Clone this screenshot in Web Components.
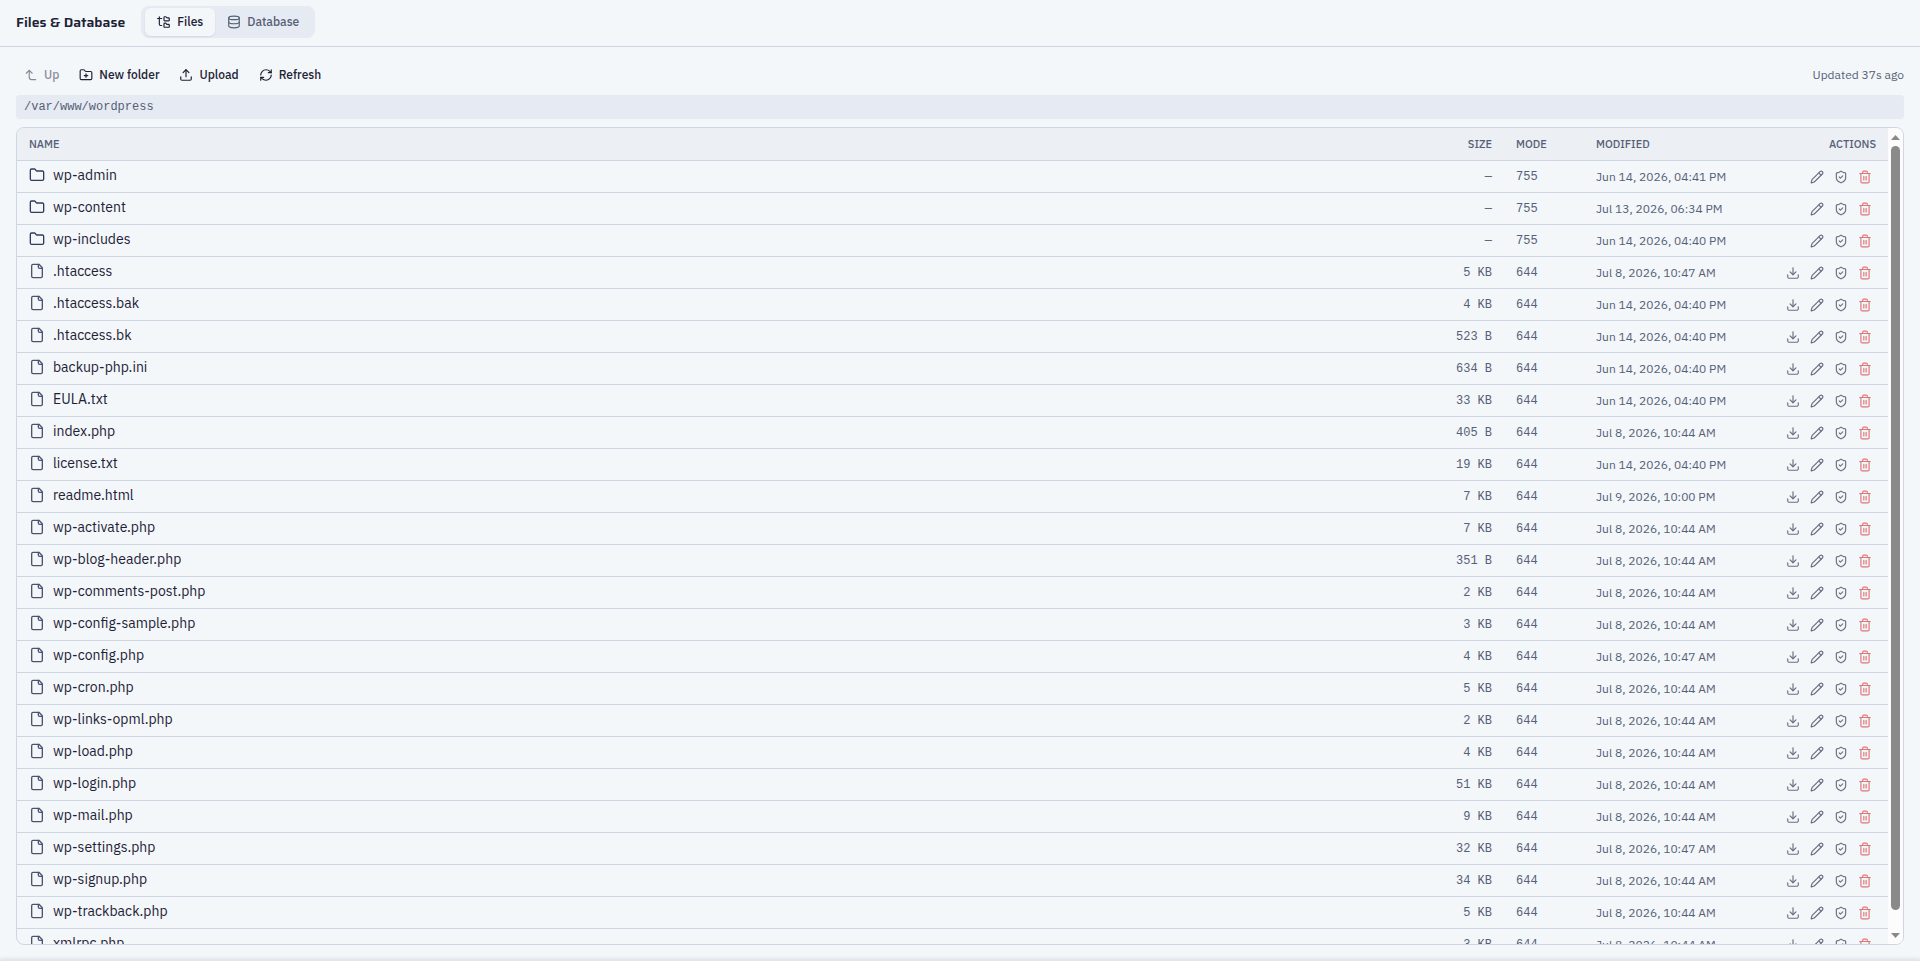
<!DOCTYPE html>
<html lang="en">
<head>
<meta charset="utf-8">
<meta name="viewport" content="width=device-width, initial-scale=1">
<title>Files &amp; Database</title>
<style>
    :root {
        --bg: #f3f7fa;
        --surface: #e6eaf2;
        --head: #eceff4;
        --line: #cfd6e3;
        --text: #1d2235;
        --muted: #556076;
        --danger: #df7676;
        --mono: "Liberation Mono", monospace;
        --sans: "IBM Plex Sans", "Noto Sans", sans-serif;
        --display: "Saira", "IBM Plex Sans", "Noto Sans", sans-serif;
    }
    html, body { height: 100%; }
    body { margin: 0; background: var(--bg); color: var(--text); font: 12px/16px var(--sans); }
</style>
</head>
<body>
<files-page></files-page>

<script>
const ICONS = {
    tree: '<path d="M20 10a1 1 0 0 0 1-1V6a1 1 0 0 0-1-1h-2.5a1 1 0 0 1-.8-.4l-.9-1.2A1 1 0 0 0 15 3h-2a1 1 0 0 0-1 1v5a1 1 0 0 0 1 1Z"/><path d="M20 21a1 1 0 0 0 1-1v-3a1 1 0 0 0-1-1h-2.9a1 1 0 0 1-.88-.55l-.42-.85a1 1 0 0 0-.92-.6H13a1 1 0 0 0-1 1v5a1 1 0 0 0 1 1Z"/><path d="M1 6h7"/><path d="M4 3v13a2 2 0 0 0 2 2h2"/>',
    database: '<ellipse cx="12" cy="5" rx="9" ry="3"/><path d="M3 5v14a9 3 0 0 0 18 0V5"/><path d="M3 12a9 3 0 0 0 18 0"/>',
    up: '<path d="M14 9 9 4 4 9"/><path d="M20 20h-7a4 4 0 0 1-4-4V4"/>',
    folderPlus: '<path d="M12 10v6M9 13h6"/><path d="M20 20a2 2 0 0 0 2-2V8a2 2 0 0 0-2-2h-7.900a2 2 0 0 1-1.690-.9L9.600 3.900A2 2 0 0 0 7.930 3H4a2 2 0 0 0-2 2v13a2 2 0 0 0 2 2Z"/>',
    upload: '<path d="M21 15v4a2 2 0 0 1-2 2H5a2 2 0 0 1-2-2v-4"/><path d="m17 8-5-5-5 5"/><path d="M12 3v12"/>',
    refresh: '<path d="M3 12a9 9 0 0 1 9-9 9.750 9.750 0 0 1 6.740 2.740L21 8"/><path d="M21 3v5h-5"/><path d="M21 12a9 9 0 0 1-9 9 9.750 9.750 0 0 1-6.740-2.740L3 16"/><path d="M8 16H3v5"/>',
    folder: '<path d="M20 20a2 2 0 0 0 2-2V8a2 2 0 0 0-2-2h-7.900a2 2 0 0 1-1.690-.9L9.600 3.900A2 2 0 0 0 7.930 3H4a2 2 0 0 0-2 2v13a2 2 0 0 0 2 2Z"/>',
    file: '<path d="M15 2H6a2 2 0 0 0-2 2v16a2 2 0 0 0 2 2h12a2 2 0 0 0 2-2V7Z"/><path d="M14 2v4a2 2 0 0 0 2 2h4"/>',
    download: '<path d="M21 15v4a2 2 0 0 1-2 2H5a2 2 0 0 1-2-2v-4"/><path d="m7 10 5 5 5-5"/><path d="M12 15V3"/>',
    pencil: '<path d="M21.170 6.810a1 1 0 0 0-3.990-3.990L3.840 16.170a2 2 0 0 0-.5.830l-1.320 4.350a.5.5 0 0 0 .62.620l4.350-1.320a2 2 0 0 0 .83-.5Z"/><path d="m15 5 4 4"/>',
    shield: '<path d="M20 13c0 5-3.500 7.500-7.660 8.950a1 1 0 0 1-.67-.01C7.500 20.500 4 18 4 13V6a1 1 0 0 1 1-1c2 0 4.500-1.200 6.240-2.720a1.170 1.170 0 0 1 1.520 0C14.510 3.810 17 5 19 5a1 1 0 0 1 1 1Z"/><path d="m9 12 2 2 4-4"/>',
    trash: '<path d="M3 6h18"/><path d="M19 6v14a2 2 0 0 1-2 2H7a2 2 0 0 1-2-2V6"/><path d="M8 6V4a2 2 0 0 1 2-2h4a2 2 0 0 1 2 2v2"/><path d="M10 11v6M14 11v6"/>'
};

const FILES = [
    ['wp-admin', '—', '755', 'Jun 14, 2026, 04:41 PM', true],
    ['wp-content', '—', '755', 'Jul 13, 2026, 06:34 PM', true],
    ['wp-includes', '—', '755', 'Jun 14, 2026, 04:40 PM', true],
    ['.htaccess', '5 KB', '644', 'Jul 8, 2026, 10:47 AM'],
    ['.htaccess.bak', '4 KB', '644', 'Jun 14, 2026, 04:40 PM'],
    ['.htaccess.bk', '523 B', '644', 'Jun 14, 2026, 04:40 PM'],
    ['backup-php.ini', '634 B', '644', 'Jun 14, 2026, 04:40 PM'],
    ['EULA.txt', '33 KB', '644', 'Jun 14, 2026, 04:40 PM'],
    ['index.php', '405 B', '644', 'Jul 8, 2026, 10:44 AM'],
    ['license.txt', '19 KB', '644', 'Jun 14, 2026, 04:40 PM'],
    ['readme.html', '7 KB', '644', 'Jul 9, 2026, 10:00 PM'],
    ['wp-activate.php', '7 KB', '644', 'Jul 8, 2026, 10:44 AM'],
    ['wp-blog-header.php', '351 B', '644', 'Jul 8, 2026, 10:44 AM'],
    ['wp-comments-post.php', '2 KB', '644', 'Jul 8, 2026, 10:44 AM'],
    ['wp-config-sample.php', '3 KB', '644', 'Jul 8, 2026, 10:44 AM'],
    ['wp-config.php', '4 KB', '644', 'Jul 8, 2026, 10:47 AM'],
    ['wp-cron.php', '5 KB', '644', 'Jul 8, 2026, 10:44 AM'],
    ['wp-links-opml.php', '2 KB', '644', 'Jul 8, 2026, 10:44 AM'],
    ['wp-load.php', '4 KB', '644', 'Jul 8, 2026, 10:44 AM'],
    ['wp-login.php', '51 KB', '644', 'Jul 8, 2026, 10:44 AM'],
    ['wp-mail.php', '9 KB', '644', 'Jul 8, 2026, 10:44 AM'],
    ['wp-settings.php', '32 KB', '644', 'Jul 8, 2026, 10:47 AM'],
    ['wp-signup.php', '34 KB', '644', 'Jul 8, 2026, 10:44 AM'],
    ['wp-trackback.php', '5 KB', '644', 'Jul 8, 2026, 10:44 AM'],
    ['xmlrpc.php', '3 KB', '644', 'Jul 8, 2026, 10:44 AM']
];

// ── <ui-icon name="…"> ────────────────────────────────────────────────────

class UiIcon extends HTMLElement {
    connectedCallback() {
        if (this.shadowRoot) return;
        this.attachShadow({ mode: 'open' }).innerHTML = `
            <style>
                :host { display: block; flex: none; width: 14px; height: 14px; }
                svg { display: block; width: 100%; height: 100%; }
            </style>
            <svg viewBox="0 0 24 24" fill="none" stroke="currentColor" stroke-width="2"
                 stroke-linecap="round" stroke-linejoin="round" aria-hidden="true">${ICONS[this.getAttribute('name')]}</svg>`;
    }
}
customElements.define('ui-icon', UiIcon);

// ── Toolbar button ────────────────────────────────────────────────────────

class ToolButton extends HTMLElement {
    connectedCallback() {
        if (this.shadowRoot) return;
        this.attachShadow({ mode: 'open' }).innerHTML = `
            <style>
                :host { display: block; }
                button { display: flex; align-items: center; gap: 6px; height: 24px; padding: 0 8px;
                         border: 0; border-radius: 4px; background: none; color: var(--text);
                         font: 500 12px/16px var(--sans); cursor: pointer; }
                button:hover:enabled { background: var(--surface); }
                button:disabled { opacity: 0.5; cursor: default; }
            </style>
            <button type="button" ${this.hasAttribute('disabled') ? 'disabled' : ''}>
                <ui-icon name="${this.getAttribute('icon')}"></ui-icon><slot></slot>
            </button>`;
    }
}
customElements.define('tool-button', ToolButton);

// ── Files / Database switch ───────────────────────────────────────────────

class ViewTabs extends HTMLElement {
    connectedCallback() {
        if (this.shadowRoot) return;
        this.attachShadow({ mode: 'open' }).innerHTML = `
            <style>
                :host { display: flex; padding: 2px 4px; border-radius: 8px; background: var(--surface); }
                button { display: flex; align-items: center; gap: 6px; height: 28px; padding: 0 12px;
                         border: 0; border-radius: 6px; background: none; color: var(--muted);
                         font: 500 12px/16px var(--sans); cursor: pointer; }
                button[aria-selected=true] { background: var(--bg); color: var(--text);
                         box-shadow: 0 1px 2px rgba(30, 40, 70, 0.08); }
            </style>
            <button type="button" role="tab" aria-selected="true"><ui-icon name="tree"></ui-icon>Files</button>
            <button type="button" role="tab" aria-selected="false"><ui-icon name="database"></ui-icon>Database</button>`;
        this.setAttribute('role', 'tablist');
        const tabs = this.shadowRoot.querySelectorAll('button');
        tabs.forEach(tab => tab.addEventListener('click', () => {
            tabs.forEach(t => t.setAttribute('aria-selected', String(t === tab)));
        }));
    }
}
customElements.define('view-tabs', ViewTabs);

// ── Scroll area with an always visible rail ───────────────────────────────

class ScrollArea extends HTMLElement {
    connectedCallback() {
        if (this.shadowRoot) return;
        this.attachShadow({ mode: 'open' }).innerHTML = `
            <style>
                :host { display: flex; min-height: 0; overflow: hidden; box-sizing: border-box;
                        border: 1px solid var(--line); border-radius: 8px; }
                .view { flex: 1; min-width: 0; overflow-y: auto; scrollbar-width: none; }
                .rail { display: flex; flex-direction: column; align-items: center; flex: none;
                        width: 15px; background: #fcfcfc; }
                .arrow { display: grid; place-items: center; width: 15px; height: 18px; padding: 0;
                         border: 0; background: none; }
                .arrow svg { display: block; width: 9px; height: 5px; fill: #888; }
                .track { flex: 1; width: 9px; min-height: 0; }
                .thumb { width: 9px; border-radius: 5px; background: #8a8a8a; }
            </style>
            <div class="view"><slot></slot></div>
            <div class="rail">
                <button class="arrow" type="button" aria-label="Scroll up"><svg viewBox="0 0 9 5"><path d="M4.500 0 9 5H0Z"/></svg></button>
                <div class="track"><div class="thumb"></div></div>
                <button class="arrow" type="button" aria-label="Scroll down"><svg viewBox="0 0 9 5"><path d="M0 0h9L4.500 5Z"/></svg></button>
            </div>`;
        this._view = this.shadowRoot.querySelector('.view');
        this._track = this.shadowRoot.querySelector('.track');
        this._thumb = this.shadowRoot.querySelector('.thumb');
        const [up, down] = this.shadowRoot.querySelectorAll('.arrow');
        up.addEventListener('click', () => this._view.scrollBy(0, -32));
        down.addEventListener('click', () => this._view.scrollBy(0, 32));
        this._view.addEventListener('scroll', () => this._sync());
        new ResizeObserver(() => this._sync()).observe(this._view);
    }

    _sync() {
        const ratio = this._track.clientHeight / this._view.scrollHeight;
        this._thumb.style.height = Math.round(this._view.clientHeight * ratio) + 'px';
        this._thumb.style.marginTop = Math.round(this._view.scrollTop * ratio) + 'px';
    }
}
customElements.define('scroll-area', ScrollArea);

// ── File listing ──────────────────────────────────────────────────────────

class FileTable extends HTMLElement {
    connectedCallback() {
        if (this.shadowRoot) return;
        this.attachShadow({ mode: 'open' }).innerHTML = `
            <style>
                :host { display: block; }
                table { width: 100%; table-layout: fixed; border-collapse: separate; border-spacing: 0; }
                th, td { box-sizing: border-box; padding: 0 12px; text-align: left; white-space: nowrap;
                         border-bottom: 1px solid var(--line); color: var(--muted); }
                th { position: sticky; top: 0; height: 33px; background: var(--head);
                     font: 500 11px/16px var(--sans); text-transform: uppercase; }
                td { height: 32px; }
                .size { width: 110px; text-align: right; }
                .mode { width: 80px; }
                .modified { width: 164px; }
                .actions { width: 140px; text-align: right; }
                td.size, td.mode { font: 12px/16px var(--mono); }
                td.name { padding-bottom: 4px; }
                td.tools { padding-right: 11px; }
                .open { display: flex; align-items: center; gap: 8px; padding: 0; border: 0; background: none;
                        color: var(--text); font: 14px/20px var(--sans); cursor: pointer; }
                .open ui-icon { width: 16px; height: 16px; color: #4b556b; }
                .dir ui-icon { color: #2f3c5c; }
                .tools div { display: flex; justify-content: flex-end; }
                .tools button { display: grid; place-items: center; width: 24px; height: 24px; padding: 0;
                                border: 0; border-radius: 4px; background: none; color: #6a7080; cursor: pointer; }
                .tools button:hover { background: var(--surface); }
                .tools .delete { color: var(--danger); }
            </style>
            <table>
                <thead>
                    <tr>
                        <th class="name">Name</th><th class="size">Size</th><th class="mode">Mode</th>
                        <th class="modified">Modified</th><th class="actions">Actions</th>
                    </tr>
                </thead>
                <tbody>${FILES.map(f => this._row(f)).join('')}</tbody>
            </table>`;
    }

    _row([name, size, mode, modified, isDir]) {
        const tool = (icon, label, cls = '') =>
            `<button type="button" class="${cls}" aria-label="${label} ${name}"><ui-icon name="${icon}"></ui-icon></button>`;
        return `<tr>
            <td class="name"><button type="button" class="open ${isDir ? 'dir' : ''}"><ui-icon name="${isDir ? 'folder' : 'file'}"></ui-icon>${name}</button></td>
            <td class="size">${size}</td>
            <td class="mode">${mode}</td>
            <td class="modified">${modified}</td>
            <td class="tools"><div>
                ${isDir ? '' : tool('download', 'Download')}
                ${tool('pencil', 'Rename')}
                ${tool('shield', 'Permissions of')}
                ${tool('trash', 'Delete', 'delete')}
            </div></td>
        </tr>`;
    }
}
customElements.define('file-table', FileTable);

// ── Page ──────────────────────────────────────────────────────────────────

class FilesPage extends HTMLElement {
    connectedCallback() {
        if (this.shadowRoot) return;
        this.attachShadow({ mode: 'open' }).innerHTML = `
            <style>
                :host { display: flex; flex-direction: column; height: 100vh; overflow: hidden; }
                header { display: flex; align-items: center; gap: 16px; padding: 6px 16px 8px;
                         border-bottom: 1px solid var(--line); }
                h1 { margin: 0; font: 600 14px/20px var(--display); }
                main { display: flex; flex-direction: column; gap: 8px; flex: 1; min-height: 0; padding: 16px; }
                .toolbar { display: flex; align-items: center; gap: 4px; }
                .updated { margin-left: auto; color: var(--muted); }
                .path { padding: 4px 8px; border-radius: 4px; background: var(--surface);
                        color: var(--muted); font: 12px/16px var(--mono); }
                scroll-area { flex: 1; }
                footer { box-shadow: 0 0 4px 1px rgba(30, 40, 60, 0.25); }
            </style>
            <header>
                <h1>Files &amp; Database</h1>
                <view-tabs></view-tabs>
            </header>
            <main>
                <div class="toolbar">
                    <tool-button icon="up" disabled>Up</tool-button>
                    <tool-button icon="folderPlus">New folder</tool-button>
                    <tool-button icon="upload">Upload</tool-button>
                    <tool-button icon="refresh">Refresh</tool-button>
                    <span class="updated">Updated 37s ago</span>
                </div>
                <div class="path">/var/www/wordpress</div>
                <scroll-area><file-table></file-table></scroll-area>
            </main>
            <footer></footer>`;
    }
}
customElements.define('files-page', FilesPage);
</script>
</body>
</html>
